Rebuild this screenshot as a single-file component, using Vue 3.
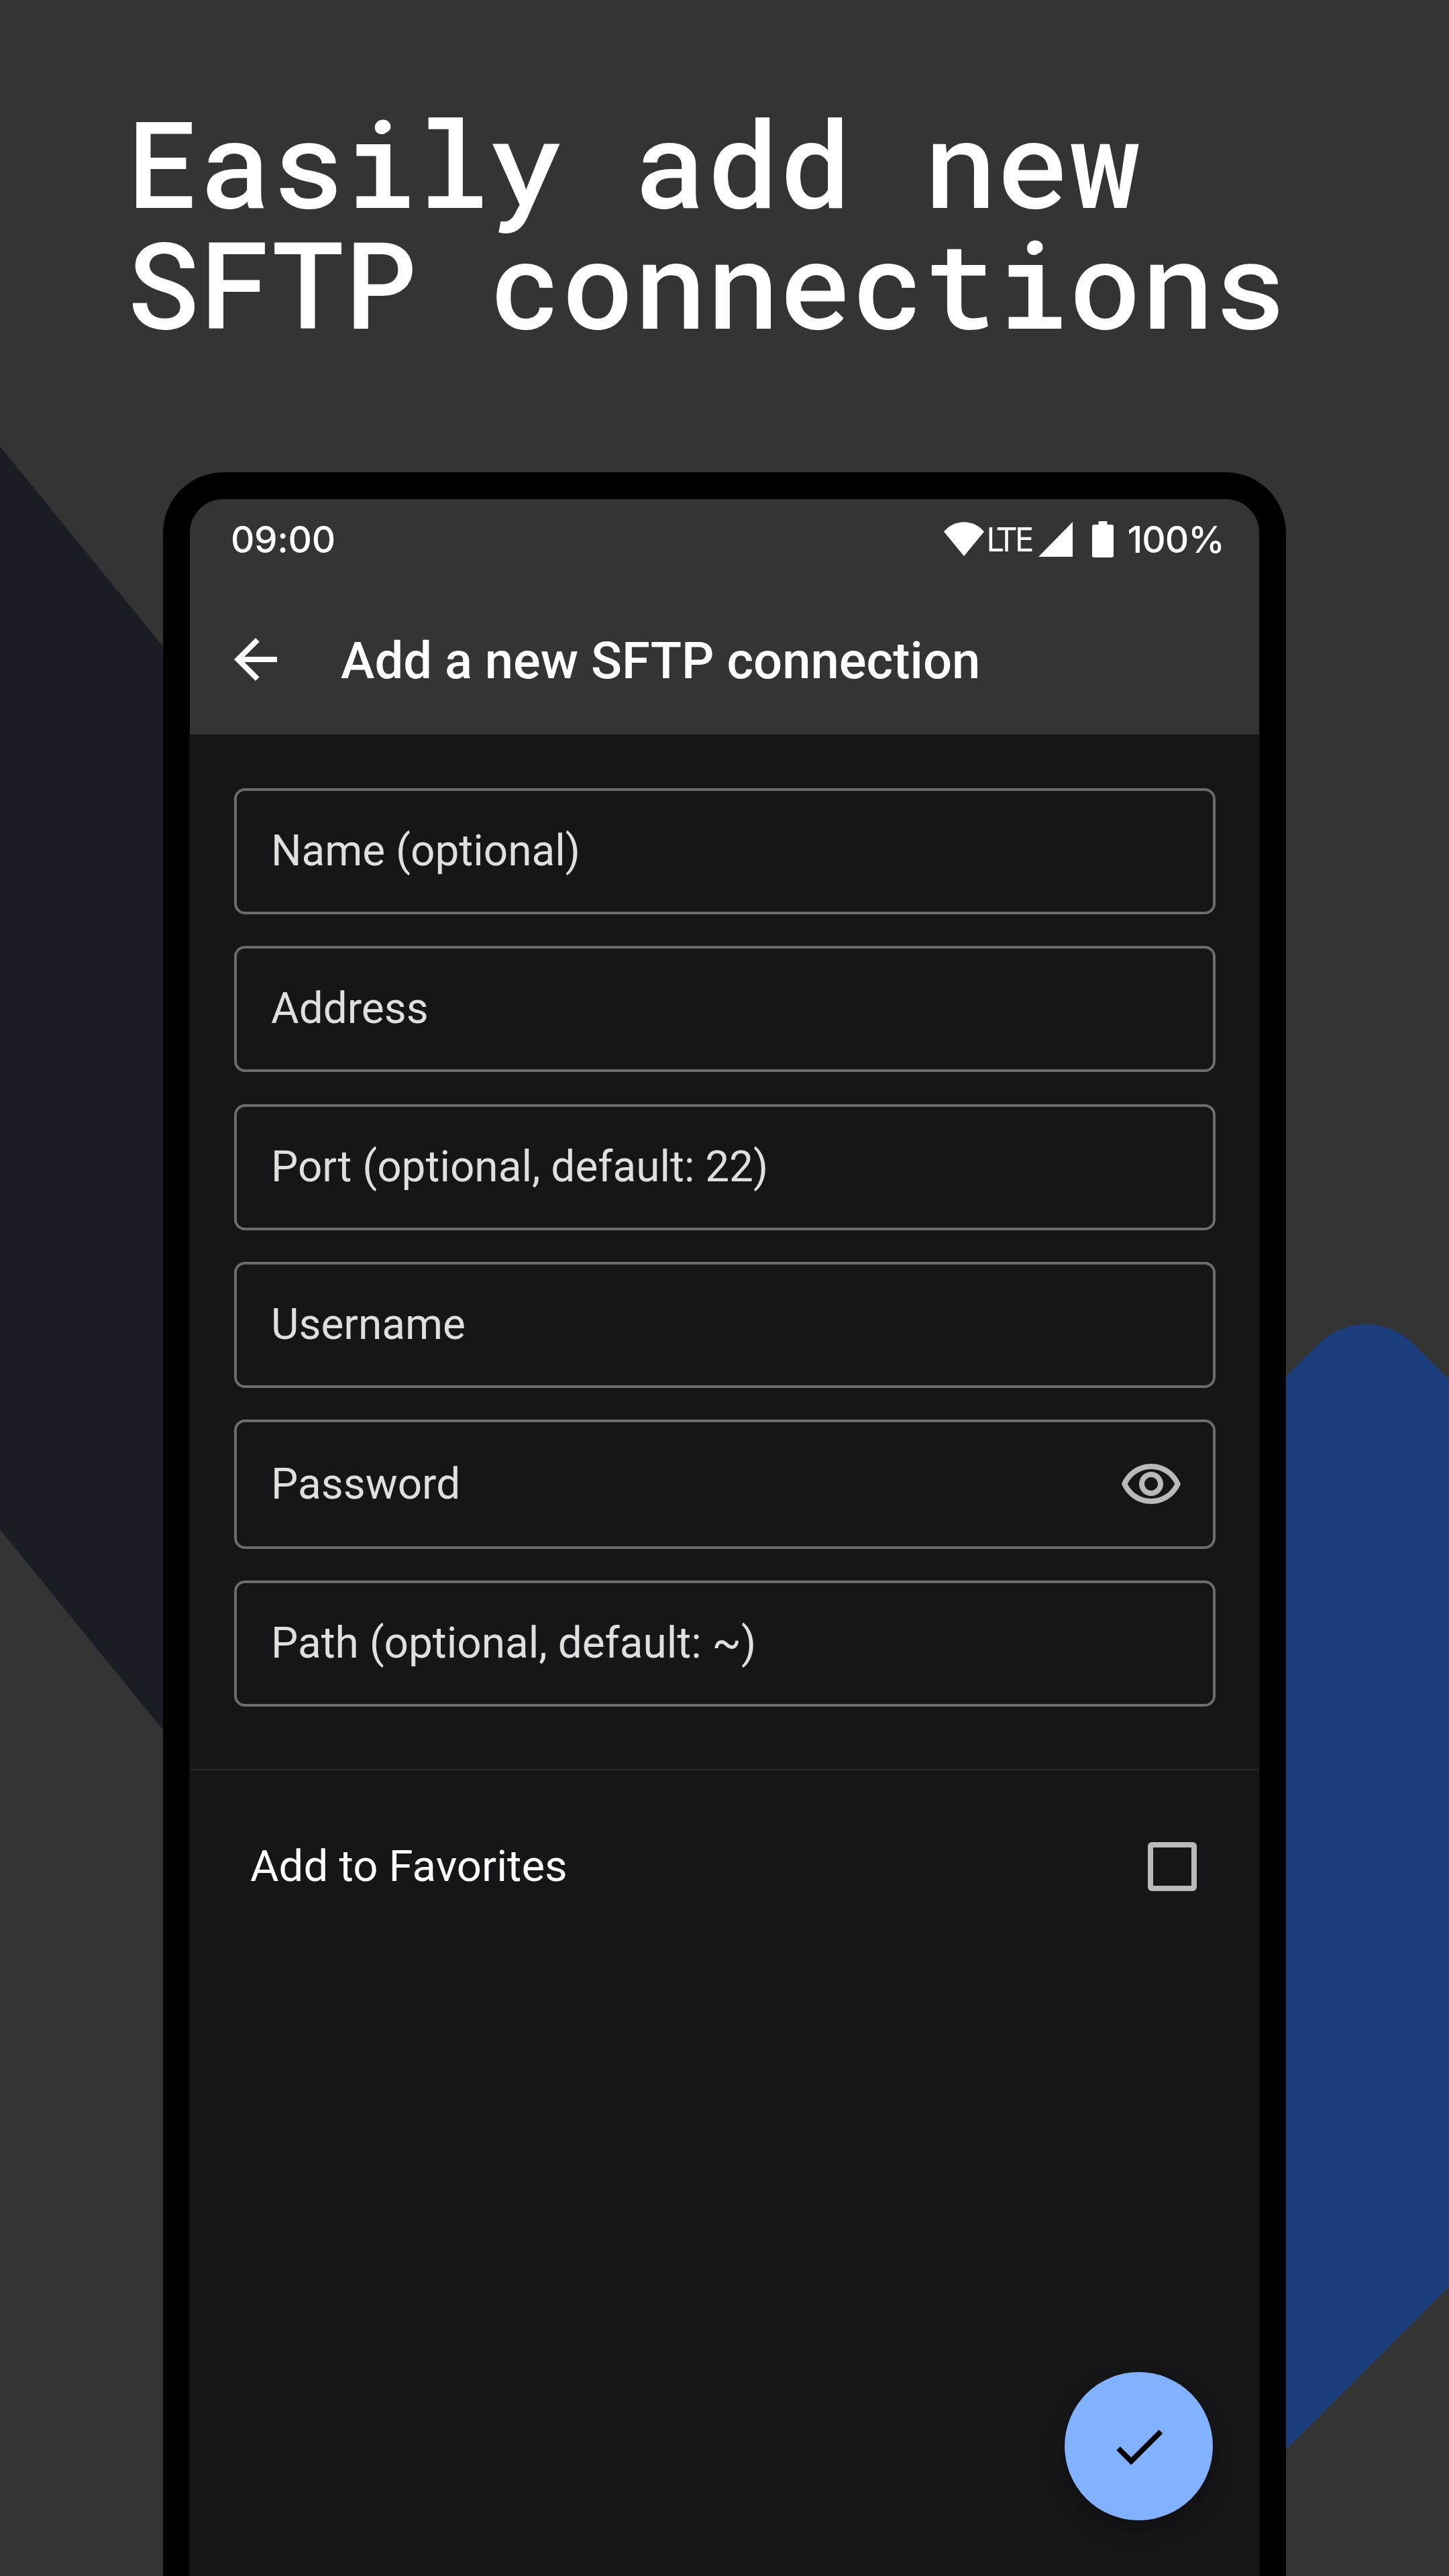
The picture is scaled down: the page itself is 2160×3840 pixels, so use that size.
<script setup>
const fields = [
  { label: 'Name (optional)' },
  { label: 'Address' },
  { label: 'Port (optional, default: 22)' },
  { label: 'Username' },
  { label: 'Password', secret: true },
  { label: 'Path (optional, default: ~)' },
]
</script>

<template>
  <main class="page">
    <svg class="backdrop" viewBox="0 0 2160 3840" aria-hidden="true">
      <polygon points="0,665.5 283,1013 283,2628 0,2280" fill="#1a1d24" />
      <path
        d="M1877 2092 L1965.8 2003.3 A100 100 0 0 1 2107.2 2003.3 L2160 2056 V3409 L1877 3692 Z"
        fill="#1c3e7c"
      />
    </svg>

    <h1 class="headline">Easily add new<br />SFTP connections</h1>

    <section class="phone">
      <div class="screen">
        <header class="top">
          <div class="status">
            <span class="clock">09:00</span>
            <svg class="wifi" viewBox="0 0 60 51">
              <path d="M0 14.5 C16 -4.5 44 -4.5 60 14.5 L30 51 Z" fill="#fff" />
            </svg>
            <span class="lte">LTE</span>
            <svg class="signal" viewBox="0 0 51 52">
              <path d="M51 0 V52 H0 Z" fill="#fff" />
            </svg>
            <svg class="battery" viewBox="0 0 32 54">
              <path
                d="M9.5 0 H22.5 V5 H29 Q32 5 32 8 V51 Q32 54 29 54 H3 Q0 54 0 51 V8 Q0 5 3 5 H9.5 Z"
                fill="#fff"
              />
            </svg>
            <span class="level">100%</span>
          </div>
          <div class="toolbar">
            <svg class="back" viewBox="0 0 24 24">
              <path
                d="M20 11H7.83l5.59-5.59L12 4l-8 8 8 8 1.41-1.41L7.83 13H20v-2z"
                fill="#fff"
              />
            </svg>
            <h2 class="title">Add a new SFTP connection</h2>
          </div>
        </header>

        <div class="form">
          <div
            v-for="field in fields"
            :key="field.label"
            class="field"
            :class="{ secret: field.secret }"
          >
            <span>{{ field.label }}</span>
            <svg v-if="field.secret" class="eye" viewBox="0 0 24 24">
              <path
                d="M12 6c3.79 0 7.17 2.13 8.82 5.5C19.17 14.87 15.79 17 12 17s-7.17-2.13-8.82-5.5C4.83 8.13 8.21 6 12 6m0-2C7 4 2.73 7.11 1 11.5 2.73 15.89 7 19 12 19s9.27-3.11 11-7.5C21.27 7.11 17 4 12 4zm0 5c1.38 0 2.5 1.12 2.5 2.5S13.38 14 12 14s-2.5-1.12-2.5-2.5S10.62 9 12 9m0-2c-2.48 0-4.5 2.02-4.5 4.5S9.52 16 12 16s4.5-2.02 4.5-4.5S14.48 7 12 7z"
                fill="#bababa"
              />
            </svg>
          </div>
        </div>

        <div class="favorites">
          <span class="favorites-label">Add to Favorites</span>
          <span class="checkbox"></span>
        </div>

        <div class="fab">
          <svg viewBox="0 0 24 24">
            <path d="M9 16.17L4.83 12l-1.42 1.41L9 19 21 7l-1.41-1.41z" fill="#000" />
          </svg>
        </div>
      </div>
    </section>
  </main>
</template>

<style>
body {
  background: #343435;
}
</style>

<style scoped>
.page {
  position: relative;
  box-sizing: border-box;
  width: 2160px;
  height: 3840px;
  padding-top: 150px;
  overflow: hidden;
  background: #343435;
  color: #fff;
  font-family: Roboto, sans-serif;
}
.backdrop {
  position: absolute;
  inset: 0;
  width: 2160px;
  height: 3840px;
}
.headline {
  position: relative;
  height: 360px;
  margin: 0 0 194px 189px;
  font: 500 180px/180px 'Roboto Mono', monospace;
  white-space: nowrap;
}
.phone {
  position: relative;
  box-sizing: border-box;
  width: 1674px;
  height: 3300px;
  margin-left: 243px;
  padding: 40px;
  border-radius: 90px;
  background: #000;
}
.screen {
  position: relative;
  height: 100%;
  overflow: hidden;
  border-radius: 50px;
  background: #161618;
}
.top {
  height: 351px;
  background: #343435;
}
.status {
  display: flex;
  align-items: center;
  box-sizing: border-box;
  height: 119px;
  padding: 0 52px 0 61px;
}
.clock,
.level {
  margin-top: 2px;
  font: 530 55px/1 Inter, sans-serif;
  font-feature-settings: 'calt' 0;
}
.clock {
  margin-right: auto;
  letter-spacing: -0.4px;
}
.wifi {
  width: 60px;
  height: 51px;
}
.lte {
  margin: 2px 0 0 3px;
  font: 50px/1 'DejaVu Sans Condensed', 'DejaVu Sans', sans-serif;
  letter-spacing: -1.6px;
}
.signal {
  width: 51px;
  height: 52px;
  margin-left: 8px;
}
.battery {
  width: 32px;
  height: 54px;
  margin-left: 29px;
}
.level {
  margin-left: 21px;
  letter-spacing: -1px;
}
.toolbar {
  display: flex;
  align-items: center;
  box-sizing: border-box;
  height: 232px;
  padding: 8px 0 0 50px;
}
.back {
  width: 96px;
  height: 96px;
}
.title {
  margin: 4px 0 0 79px;
  font-size: 76px;
  font-weight: 500;
  line-height: 1;
  white-space: nowrap;
}
.form {
  display: flex;
  flex-direction: column;
  gap: 47.3px;
  box-sizing: border-box;
  height: 1544px;
  padding: 80px 65px 0 66px;
  border-bottom: 2px solid #29292a;
}
.field {
  display: flex;
  flex: none;
  align-items: center;
  justify-content: space-between;
  box-sizing: border-box;
  height: 188px;
  padding: 0 44px 0 51px;
  border: 4px solid #6c6c6d;
  border-radius: 16px;
  color: #dfdfdf;
  font-size: 63.9px;
  line-height: 1;
}
.secret {
  height: 192.6px;
}
.eye {
  width: 96px;
  height: 96px;
  margin-top: 4px;
}
.favorites {
  display: flex;
  align-items: center;
  justify-content: space-between;
  height: 287px;
  padding: 0 93px 0 90px;
}
.favorites-label {
  margin-bottom: 2px;
  font-size: 65.3px;
  line-height: 1;
}
.checkbox {
  box-sizing: border-box;
  width: 73px;
  height: 73px;
  border: 8px solid #bababa;
  border-radius: 6px;
}
.fab {
  position: absolute;
  top: 2792px;
  left: 1304px;
  display: flex;
  align-items: center;
  justify-content: center;
  width: 221px;
  height: 221px;
  border-radius: 50%;
  background: #82b1ff;
  box-shadow: 0 14px 30px rgba(0, 0, 0, 0.28);
}
.fab svg {
  width: 94px;
  height: 94px;
}
</style>
